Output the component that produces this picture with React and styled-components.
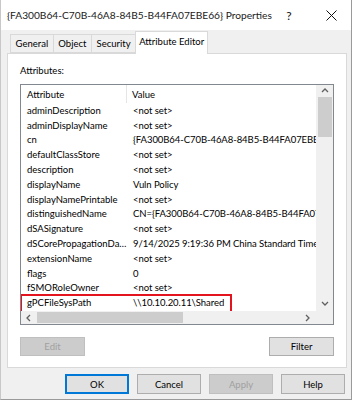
import React from 'react';
import styled, { createGlobalStyle } from 'styled-components';

const GlobalStyle = createGlobalStyle`
  html, body {
    margin: 0;
    padding: 0;
    background: #ffffff;
  }
  body {
    font-family: Lato, "Liberation Sans", sans-serif;
    color: #000;
  }
`;

const Window = styled.div`
  width: 352px;
  height: 400px;
  border-right: 1px solid #9a9a9a;
  border-bottom: 1px solid #9a9a9a;
  border-left: 1px solid #c8c8c8;
  background: #f0f0f0;
  display: flex;
  flex-direction: column;
  box-sizing: border-box;
`;

const TitleBar = styled.div`
  height: 30px;
  background: #ffffff;
  display: flex;
  align-items: center;
  padding-left: 6px;
  flex-shrink: 0;
`;

const Title = styled.div`
  font-size: 10.2px;
  flex: 1;
  min-width: 0;
  white-space: nowrap;
  color: #1a1a1a;
`;

const TitleButton = styled.div`
  width: ${({ w }) => w}px;
  flex-shrink: 0;
  display: flex;
  justify-content: center;
  align-items: center;
  font-size: 12px;
  color: #111;
`;

const Body = styled.div`
  flex: 1;
  padding: 1px 6px 0 6px;
  display: flex;
  flex-direction: column;
`;

const TabStrip = styled.div`
  display: flex;
  align-items: flex-end;
  height: 22px;
  padding-left: 3px;
  position: relative;
  z-index: 1;
`;

const Tab = styled.div`
  height: ${({ active }) => (active ? 23 : 19)}px;
  box-sizing: border-box;
  padding: 0 ${({ active }) => (active ? 3 : 4.6)}px;
  margin-left: ${({ active }) => (active ? -1 : 0)}px;
  margin-right: ${({ active }) => (active ? -1 : 0)}px;
  font-size: 9.5px;
  display: flex;
  align-items: ${({ active }) => (active ? 'flex-start' : 'center')};
  padding-top: ${({ active }) => (active ? 4 : 0)}px;
  background: ${({ active }) => (active ? '#ffffff' : '#f0f0f0')};
  border: 1px solid #d9d9d9;
  border-bottom: ${({ active }) => (active ? 'none' : '1px solid #d9d9d9')};
  border-left: ${({ first, active }) => (first || active ? '1px solid #d9d9d9' : 'none')};
  margin-bottom: ${({ active }) => (active ? -1 : 0)}px;
  white-space: nowrap;
`;

const Panel = styled.div`
  width: 340px;
  height: 315px;
  box-sizing: border-box;
  background: #ffffff;
  border: 1px solid #d9d9d9;
  padding: 11px 12px 0 12px;
  display: flex;
  flex-direction: column;
`;

const Label = styled.div`
  font-size: 9.5px;
  height: 19px;
`;

const ListBox = styled.div`
  width: 314px;
  height: 241px;
  box-sizing: border-box;
  border: 1px solid #828790;
  display: grid;
  grid-template-columns: 1fr 17px;
  grid-template-rows: 1fr 13px;
  overflow: hidden;
`;

const ListArea = styled.div`
  overflow: hidden;
  display: flex;
  flex-direction: column;
`;

const Header = styled.div`
  display: grid;
  grid-template-columns: 106px 1fr;
  height: 18px;
  flex-shrink: 0;
  font-size: 9.5px;
  align-items: center;
`;

const HeaderCell = styled.div`
  padding-left: ${({ pad }) => pad}px;
  height: 100%;
  display: flex;
  align-items: center;
  border-right: ${({ sep }) => (sep ? '1px solid #e5e5e5' : 'none')};
`;

const Row = styled.div`
  display: grid;
  grid-template-columns: 106px 1fr;
  height: 14.8px;
  flex-shrink: 0;
  font-size: 9.5px;
  align-items: center;
  position: relative;
  white-space: nowrap;

  ${({ marked }) =>
    marked &&
    `
    &::after {
      content: '';
      position: absolute;
      left: -1px;
      top: -1px;
      width: 212px;
      height: 20px;
      box-sizing: border-box;
      border: 2px solid #e3141e;
    }
  `}
`;

const Cell = styled.div`
  padding-left: ${({ pad }) => pad}px;
  overflow: hidden;
  text-overflow: ${({ ellipsis }) => (ellipsis ? 'ellipsis' : 'clip')};
  white-space: nowrap;
  letter-spacing: ${({ tight }) => (tight ? '-0.06px' : 'normal')};
`;

const VScroll = styled.div`
  background: #f0f0f0;
  display: flex;
  flex-direction: column;
  align-items: center;
`;

const HScroll = styled.div`
  background: #f0f0f0;
  display: flex;
  align-items: center;
`;

const Corner = styled.div`
  background: #f0f0f0;
`;

const Arrow = styled.div`
  width: ${({ w }) => w}px;
  height: ${({ h }) => h}px;
  display: flex;
  align-items: center;
  justify-content: center;
  flex-shrink: 0;
`;

const VThumb = styled.div`
  width: 14px;
  height: 40px;
  background: #cdcdcd;
`;

const VTrack = styled.div`
  flex: 1;
`;

const HThumb = styled.div`
  width: 146px;
  height: 11px;
  background: #cdcdcd;
`;

const HTrack = styled.div`
  flex: 1;
`;

const ButtonRow = styled.div`
  display: flex;
  justify-content: space-between;
  margin-top: 12px;
`;

const Button = styled.div`
  width: ${({ w }) => w}px;
  height: ${({ h }) => h}px;
  box-sizing: border-box;
  display: flex;
  align-items: center;
  justify-content: center;
  font-size: 9.5px;
  background: ${({ disabled }) => (disabled ? '#cccccc' : '#e1e1e1')};
  color: ${({ disabled }) => (disabled ? '#a0a0a0' : '#000')};
  border: 1px solid ${({ disabled, primary }) => (primary ? '#0078d7' : disabled ? '#bfbfbf' : '#adadad')};
  box-shadow: ${({ primary }) => (primary ? 'inset 0 0 0 1px #0078d7' : 'none')};
`;

const Footer = styled.div`
  display: flex;
  justify-content: flex-end;
  gap: 8px;
  padding: 6px 0 0 0;
`;

const Chevron = ({ dir }) => {
  const paths = {
    up: 'M1 5 L4 2 L7 5',
    down: 'M1 2 L4 5 L7 2',
    left: 'M5 1 L2 4 L5 7',
    right: 'M2 1 L5 4 L2 7',
  };
  return (
    <svg width="8" height="8" viewBox="0 0 8 8">
      <path d={paths[dir]} fill="none" stroke="#606060" strokeWidth="1.3" />
    </svg>
  );
};

const rows = [
  ['adminDescription', '<not set>'],
  ['adminDisplayName', '<not set>'],
  ['cn', '{FA300B64-C70B-46A8-84B5-B44FA07EBE66}'],
  ['defaultClassStore', '<not set>'],
  ['description', '<not set>'],
  ['displayName', 'Vuln Policy'],
  ['displayNamePrintable', '<not set>'],
  ['distinguishedName', 'CN={FA300B64-C70B-46A8-84B5-B44FA07EBE66},CN=Policies'],
  ['dSASignature', '<not set>'],
  ['dSCorePropagationData', '9/14/2025 9:19:36 PM China Standard Time'],
  ['extensionName', '<not set>'],
  ['flags', '0'],
  ['fSMORoleOwner', '<not set>'],
  ['gPCFileSysPath', '\\\\10.10.20.11\\Shared'],
];

export default function App() {
  return (
    <>
      <GlobalStyle />
      <Window>
        <TitleBar>
          <Title>{'{FA300B64-C70B-46A8-84B5-B44FA07EBE66} Properties'}</Title>
          <TitleButton w={44}>?</TitleButton>
          <TitleButton w={40}>
            <svg width="11" height="11" viewBox="0 0 11 11">
              <path d="M0.5 0.5 L10.5 10.5 M10.5 0.5 L0.5 10.5" stroke="#111" strokeWidth="1" />
            </svg>
          </TitleButton>
        </TitleBar>
        <Body>
          <TabStrip>
            <Tab first>General</Tab>
            <Tab>Object</Tab>
            <Tab>Security</Tab>
            <Tab active>Attribute Editor</Tab>
          </TabStrip>
          <Panel>
            <Label>Attributes:</Label>
            <ListBox>
              <ListArea>
                <Header>
                  <HeaderCell pad={6} sep>Attribute</HeaderCell>
                  <HeaderCell pad={5}>Value</HeaderCell>
                </Header>
                {rows.map(([name, value]) => (
                  <Row key={name} marked={name === 'gPCFileSysPath'}>
                    <Cell pad={6} ellipsis>{name}</Cell>
                    <Cell pad={6} tight>{value}</Cell>
                  </Row>
                ))}
              </ListArea>
              <VScroll>
                <Arrow w={17} h={12}><Chevron dir="up" /></Arrow>
                <VThumb />
                <VTrack />
                <Arrow w={17} h={14}><Chevron dir="down" /></Arrow>
              </VScroll>
              <HScroll>
                <Arrow w={16} h={13}><Chevron dir="left" /></Arrow>
                <HThumb />
                <HTrack />
                <Arrow w={16} h={13}><Chevron dir="right" /></Arrow>
              </HScroll>
              <Corner />
            </ListBox>
            <ButtonRow>
              <Button w={65} h={19} disabled>Edit</Button>
              <Button w={65} h={19}>Filter</Button>
            </ButtonRow>
          </Panel>
          <Footer>
            <Button w={64} h={20} primary>OK</Button>
            <Button w={64} h={20}>Cancel</Button>
            <Button w={64} h={20} disabled>Apply</Button>
            <Button w={64} h={20}>Help</Button>
          </Footer>
        </Body>
      </Window>
    </>
  );
}
